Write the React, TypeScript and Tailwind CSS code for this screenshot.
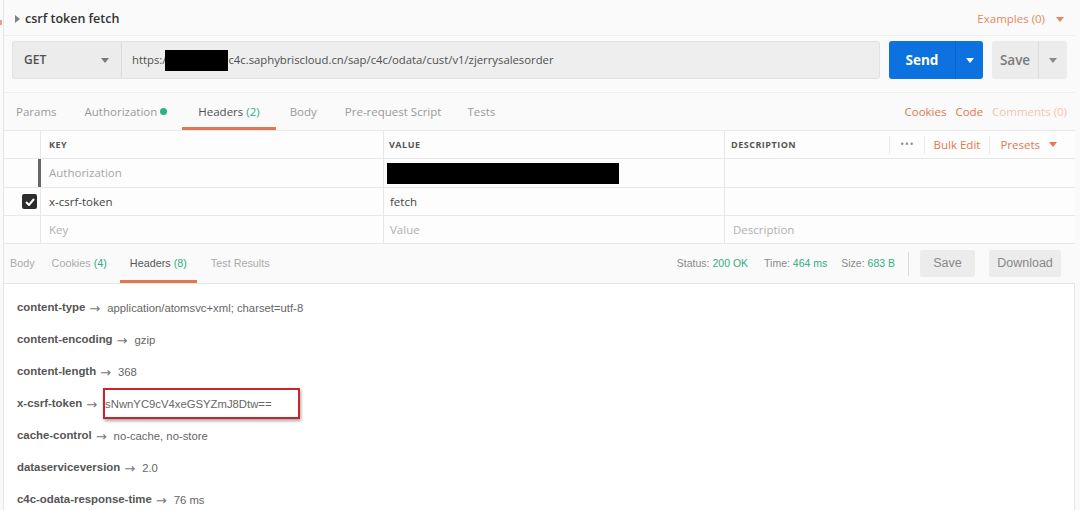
import React from "react";

const Caret = ({ className = "" }: { className?: string }) => (
  <svg width="8" height="5" viewBox="0 0 8 5" className={className}>
    <path d="M0 0 L8 0 L4 5 Z" fill="currentColor" />
  </svg>
);

const headers: [string, string][] = [
  ["content-type", "application/atomsvc+xml; charset=utf-8"],
  ["content-encoding", "gzip"],
  ["content-length", "368"],
  ["x-csrf-token", "sNwnYC9cV4xeGSYZmJ8Dtw=="],
  ["cache-control", "no-cache, no-store"],
  ["dataserviceversion", "2.0"],
  ["c4c-odata-response-time", "76 ms"],
];

export default function App() {
  return (
    <div className="relative w-[1080px] h-[510px] overflow-hidden bg-[#fafafa] font-['Open_Sans',sans-serif] text-[12px]">
      <div className="absolute left-0 top-[20px] w-[2px] h-[5px] bg-[#e8a08a]" />
      <div className="ml-[3px] mr-[5px] border-l border-[#e6e6e6] h-full flex flex-col">
        {/* title row */}
        <div className="h-[36px] shrink-0 flex items-center justify-between pt-[3px] pl-[11px] pr-[11px] border-b border-[#efefef]">
          <div className="flex items-center gap-[5px] text-[#333]">
            <svg width="5" height="8" viewBox="0 0 5 8"><path d="M0 0 L5 4 L0 8 Z" fill="#808080" /></svg>
            <span className="text-[12.5px] font-semibold">csrf token fetch</span>
          </div>
          <div className="flex items-center gap-[11px] text-[#e8875f]">
            <span className="text-[11.5px]">Examples (0)</span>
            <Caret />
          </div>
        </div>
        {/* url row */}
        <div className="h-[57px] shrink-0 flex items-start pt-[5px] pl-[8px] border-b border-[#efefef]">
          <div className="flex h-[38px] w-[868px] rounded-[3px] bg-[#ececec] border border-[#e2e2e2]">
            <div className="w-[109px] flex items-center justify-between pl-[11px] pr-[12px] border-r border-[#dadada] text-[#505050]">
              <span className="text-[12px] font-semibold">GET</span>
              <Caret className="text-[#7a7a7a]" />
            </div>
            <div className="flex-1 flex items-center pl-[10px] text-[#505050] bg-[#eeeeee] text-[11.3px]">
              <span>https:/</span>
              <span className="inline-block w-[63px] h-[21px] bg-black ml-[-1px]" />
              <span>c4c.saphybriscloud.cn/sap/c4c/odata/cust/v1/zjerrysalesorder</span>
            </div>
          </div>
          <div className="ml-[9px] flex h-[38px] w-[94px] rounded-[3px] bg-[#0c72e0] text-white">
            <div className="w-[67px] flex items-center justify-center text-[13.5px] font-bold border-r border-[#0a63c6]">Send</div>
            <div className="flex-1 flex items-center justify-center"><Caret /></div>
          </div>
          <div className="ml-[9px] flex h-[38px] w-[75px] rounded-[3px] bg-[#ececec] text-[#7b7b7b]">
            <div className="w-[47px] flex items-center justify-center text-[13.5px] font-semibold border-r border-[#dcdcdc]">Save</div>
            <div className="flex-1 flex items-center justify-center"><Caret className="text-[#8a8a8a]" /></div>
          </div>
        </div>
        {/* request tabs */}
        <div className="h-[37px] shrink-0 flex items-stretch justify-between pl-[12px] pr-[8px] text-[11.5px]">
          <div className="flex items-stretch">
            <div className="flex items-center text-[#9a9a9a] mr-[28px]">Params</div>
            <div className="flex items-center text-[#9a9a9a] mr-[15px]">
              Authorization <span className="ml-[3px] w-[7px] h-[7px] rounded-full bg-[#26b47f]" />
            </div>
            <div className="flex items-center px-[16px] border-b-[3px] border-[#e0784f] pt-[3px] text-[#505050]">
              Headers&nbsp;<span className="text-[#2fae85]">(2)</span>
            </div>
            <div className="flex items-center text-[#9a9a9a] ml-[14px] mr-[28px]">Body</div>
            <div className="flex items-center text-[#9a9a9a] mr-[26px]">Pre-request Script</div>
            <div className="flex items-center text-[#9a9a9a]">Tests</div>
          </div>
          <div className="flex items-center gap-[9px]">
            <span className="text-[#e0784f]">Cookies</span>
            <span className="text-[#e0784f]">Code</span>
            <span className="text-[#f2c4b0]">Comments (0)</span>
          </div>
        </div>
        {/* headers table */}
        <div className="shrink-0 bg-[#fdfdfd] border-t border-b border-[#e8e8e8] text-[11.5px]">
          <div className="grid grid-cols-[37px_343px_341px_1fr] h-[28px] border-b border-[#e8e8e8]">
            <div className="border-r border-[#e8e8e8]" />
            <div className="border-r border-[#e8e8e8] flex items-center pl-[8px] text-[9px] font-bold tracking-[0.5px] text-[#555]">KEY</div>
            <div className="border-r border-[#e8e8e8] flex items-center pl-[5px] text-[9px] font-bold tracking-[0.5px] text-[#555]">VALUE</div>
            <div className="flex items-center justify-between pl-[6px] pr-[18px]">
              <span className="text-[9px] font-bold tracking-[0.5px] text-[#555]">DESCRIPTION</span>
              <div className="flex items-center h-full">
                <span className="h-[18px] border-l border-[#ececec] pl-[10px] pr-[9px] text-[#888] text-[10px] tracking-[1px] flex items-center">•••</span>
                <span className="h-[18px] border-l border-[#ececec] px-[9px] text-[#e0784f] flex items-center">Bulk Edit</span>
                <span className="h-[18px] border-l border-[#ececec] pl-[10px] text-[#e0784f] flex items-center gap-[9px]">Presets <Caret /></span>
              </div>
            </div>
          </div>
          <div className="grid grid-cols-[37px_343px_341px_1fr] h-[29px] border-b border-[#e8e8e8]">
            <div className="border-r-[3px] border-[#666]" />
            <div className="border-r border-[#e8e8e8] flex items-center pl-[8px] text-[#a6a6a6]">Authorization</div>
            <div className="border-r border-[#e8e8e8] flex items-center pl-[3px]">
              <span className="w-[232px] h-[21px] bg-black" />
            </div>
            <div />
          </div>
          <div className="grid grid-cols-[37px_343px_341px_1fr] h-[28px] border-b border-[#e8e8e8]">
            <div className="border-r border-[#e8e8e8] flex items-center justify-end pr-[3px]">
              <span className="w-[15px] h-[15px] rounded-[2px] bg-[#2d2d2d] flex items-center justify-center">
                <svg width="10" height="8" viewBox="0 0 10 8"><path d="M1 4 L4 7 L9 1" stroke="#fff" strokeWidth="2" fill="none" /></svg>
              </span>
            </div>
            <div className="border-r border-[#e8e8e8] flex items-center pl-[8px] text-[#444]">x-csrf-token</div>
            <div className="border-r border-[#e8e8e8] flex items-center pl-[6px] text-[#444]">fetch</div>
            <div />
          </div>
          <div className="grid grid-cols-[37px_343px_341px_1fr] h-[27px]">
            <div className="border-r border-[#e8e8e8]" />
            <div className="border-r border-[#e8e8e8] flex items-center pl-[8px] text-[#b0b0b0]">Key</div>
            <div className="border-r border-[#e8e8e8] flex items-center pl-[6px] text-[#b0b0b0]">Value</div>
            <div className="flex items-center pl-[8px] text-[#b0b0b0]">Description</div>
          </div>
        </div>
        {/* response tabs */}
        <div className="h-[40px] shrink-0 flex items-stretch justify-between border-b border-[#e6e6e6] pl-[6px] pr-[14px] font-['Liberation_Sans',Arial,sans-serif] text-[10.8px]">
          <div className="flex items-stretch">
            <div className="flex items-center text-[#aaa] mr-[17px]">Body</div>
            <div className="flex items-center text-[#aaa] mr-[13px]">Cookies&nbsp;<span className="text-[#2fae85]">(4)</span></div>
            <div className="flex items-center px-[10px] text-[#555] border-b-[3px] border-[#e0784f] pt-[3px]">Headers&nbsp;<span className="text-[#2fae85]">(8)</span></div>
            <div className="flex items-center text-[#aaa] ml-[14px]">Test Results</div>
          </div>
          <div className="flex items-center text-[10.5px] text-[#8a8a8a]">
            <span>Status:&nbsp;<span className="text-[#2fae85]">200 OK</span></span>
            <span className="ml-[16px]">Time:&nbsp;<span className="text-[#2fae85]">464 ms</span></span>
            <span className="ml-[14px]">Size:&nbsp;<span className="text-[#2fae85]">683 B</span></span>
            <span className="ml-[13px] h-[24px] border-l border-[#dcdcdc]" />
            <span className="ml-[11px] w-[55px] h-[27px] bg-[#ececec] flex items-center justify-center text-[12.5px] text-[#888] rounded-[2px]">Save</span>
            <span className="ml-[14px] w-[72px] h-[27px] bg-[#ececec] flex items-center justify-center text-[12.5px] text-[#888] rounded-[2px]">Download</span>
          </div>
        </div>
        {/* response headers */}
        <div className="flex-1 bg-white border-r border-[#e6e6e6] pl-[13px] pt-[8px] font-['Liberation_Sans',Arial,sans-serif] text-[11.3px]">
          {headers.map(([k, v]) => (
            <div key={k} className="h-[32px] flex items-center">
              <span className="font-bold text-[#555] text-[11.4px]">{k}</span>
              <span className="text-[#777] ml-[4px] font-['DejaVu_Sans',sans-serif] text-[13px] leading-none">→</span>
              {k === "x-csrf-token" ? (
                <span className="ml-[8px] relative">
                  <span className="text-[#666]">{v}</span>
                  <span className="absolute left-[-2px] top-[-8px] w-[197px] h-[31px] border-[2px] border-[#c9262b] shadow-[1px_2px_3px_rgba(0,0,0,0.35)]" />
                </span>
              ) : (
                <span className="ml-[7px] text-[#666]">{v}</span>
              )}
            </div>
          ))}
        </div>
      </div>
    </div>
  );
}
